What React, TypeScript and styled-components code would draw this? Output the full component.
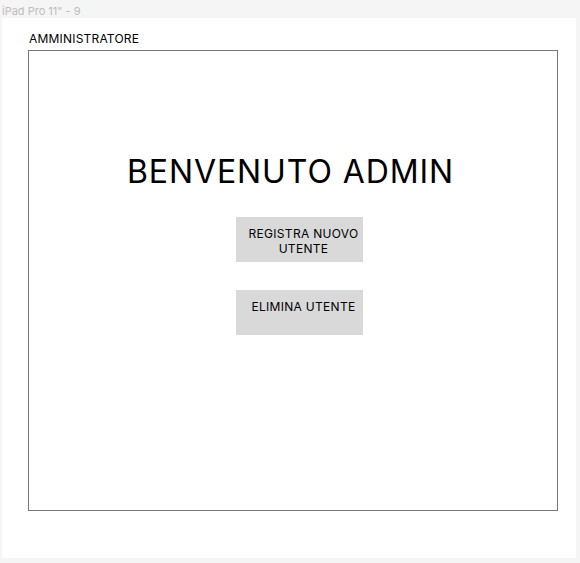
import React from "react";
import styled, { createGlobalStyle } from "styled-components";

const Global = createGlobalStyle`
  html, body {
    margin: 0;
    padding: 0;
    background: #f5f5f5;
  }
  body {
    font-family: Inter, "Noto Sans", "Liberation Sans", sans-serif;
    -webkit-font-smoothing: antialiased;
  }
`;

const Page = styled.div`
  width: 580px;
  height: 563px;
  display: flex;
  flex-direction: column;
`;

const ArtboardLabel = styled.div`
  height: 18px;
  box-sizing: border-box;
  padding: 4px 0 0 2px;
  font-size: 11px;
  line-height: 14px;
  color: #bdbdbd;
`;

const Artboard = styled.div`
  margin: 0 4px 0 2px;
  height: 540px;
  background: #ffffff;
  padding: 13px 0 0 26px;
  box-sizing: border-box;
  display: flex;
  flex-direction: column;
`;

const SectionTitle = styled.div`
  font-size: 12px;
  line-height: 15px;
  letter-spacing: 0.2px;
  color: #000;
  padding-left: 1px;
  margin-bottom: 4px;
`;

const Frame = styled.div`
  width: 530px;
  height: 461px;
  border: 1px solid #777777;
  box-sizing: border-box;
  display: flex;
  flex-direction: column;
  align-items: center;
  padding-top: 102px;
`;

const Heading = styled.h1`
  margin: 0 5px 27px 0;
  font-size: 32px;
  line-height: 37px;
  letter-spacing: 0.9px;
  font-weight: 400;
  color: #000;
`;

const ActionButton = styled.div`
  width: 127px;
  height: 45px;
  box-sizing: border-box;
  background: #d9d9d9;
  margin-left: 12px;
  margin-bottom: 28px;
  padding: 9px 0 0 9px;
  font-size: 12px;
  line-height: 15px;
  letter-spacing: 0.3px;
  color: #000;
  text-align: center;
`;

export default function App() {
  return (
    <>
      <Global />
      <Page>
        <ArtboardLabel>iPad Pro 11" - 9</ArtboardLabel>
        <Artboard>
          <SectionTitle>AMMINISTRATORE</SectionTitle>
          <Frame>
            <Heading>BENVENUTO ADMIN</Heading>
            <ActionButton>
              REGISTRA NUOVO
              <br />
              UTENTE
            </ActionButton>
            <ActionButton>ELIMINA UTENTE</ActionButton>
          </Frame>
        </Artboard>
      </Page>
    </>
  );
}
